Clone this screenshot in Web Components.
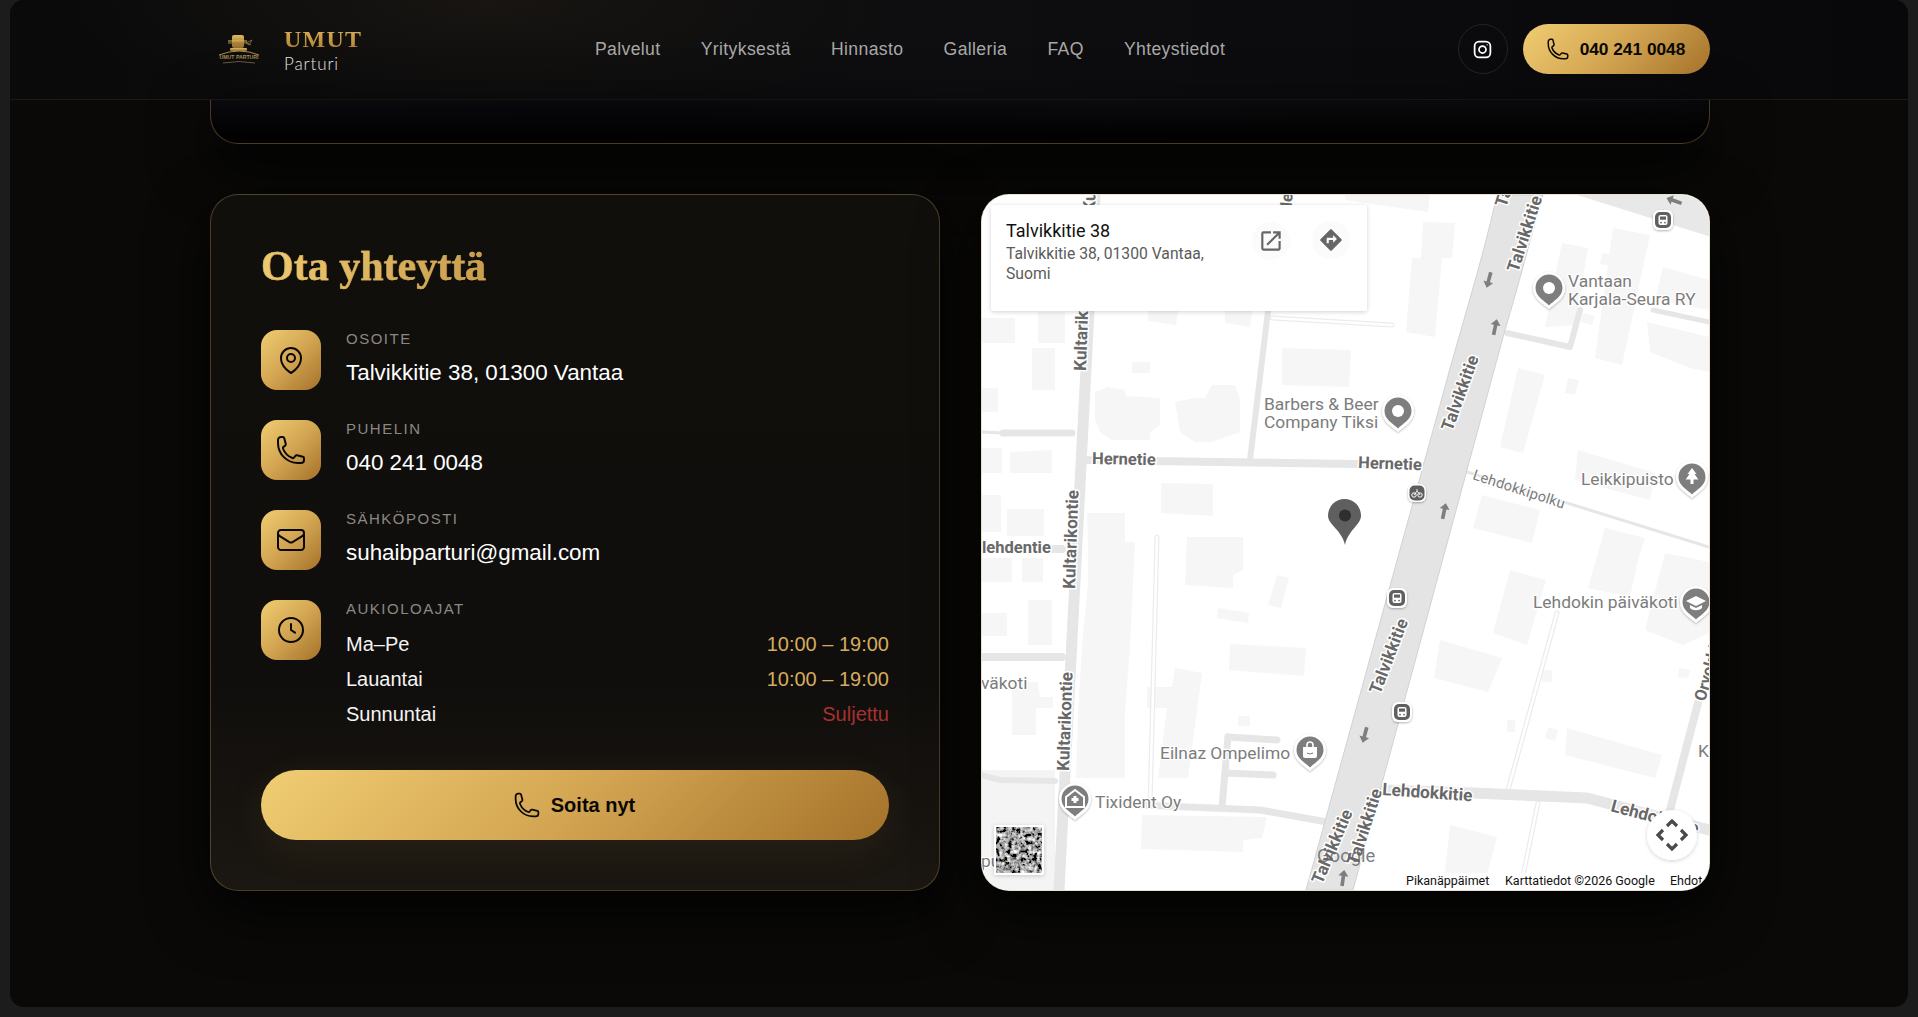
<!DOCTYPE html>
<html lang="fi"><head><meta charset="utf-8"><title>Umut Parturi</title>
<style>
html,body{margin:0;padding:0;height:100%;background:#1c1c1c}
body{font-family:"Liberation Sans",Arial,sans-serif;overflow:hidden}
</style></head><body>
<app-frame>
  <site-header></site-header>
  <hero-strip></hero-strip>
  <contact-section>
    <contact-card>
      <info-row slot="rows" icon="pin" label="OSOITE">Talvikkitie 38, 01300 Vantaa</info-row>
      <info-row slot="rows" icon="phone" label="PUHELIN">040 241 0048</info-row>
      <info-row slot="rows" icon="mail" label="SÄHKÖPOSTI">suhaibparturi@gmail.com</info-row>
      <info-row slot="rows" icon="clock" label="AUKIOLOAJAT">
        <hours-row day="Ma–Pe" time="10:00 – 19:00"></hours-row>
        <hours-row day="Lauantai" time="10:00 – 19:00"></hours-row>
        <hours-row day="Sunnuntai" time="Suljettu" closed></hours-row>
      </info-row>
    </contact-card>
    <map-panel></map-panel>
  </contact-section>
</app-frame>
<script>
const ICONS={
 phone:'<path d="M2.25 6.75c0 8.284 6.716 15 15 15h2.25a2.25 2.25 0 002.25-2.25v-1.372c0-.516-.351-.966-.852-1.091l-4.423-1.106c-.44-.11-.902.055-1.173.417l-.97 1.293c-.282.376-.769.542-1.21.38a12.035 12.035 0 01-7.143-7.143c-.162-.441.004-.928.38-1.21l1.293-.97c.363-.271.527-.734.417-1.173L6.963 3.102a1.125 1.125 0 00-1.091-.852H4.5A2.25 2.25 0 002.25 4.5v2.25z"/>',
 pin:'<path d="M15 10.5a3 3 0 11-6 0 3 3 0 016 0z"/><path d="M19.5 10.5c0 7.142-7.5 11.25-7.5 11.25S4.5 17.642 4.5 10.5a7.5 7.5 0 1115 0z"/>',
 mail:'<path d="M21.75 6.75v10.5a2.25 2.25 0 01-2.25 2.25h-15a2.25 2.25 0 01-2.25-2.25V6.75m19.5 0A2.25 2.25 0 0019.5 4.5h-15a2.25 2.25 0 00-2.25 2.25m19.5 0v.243a2.25 2.25 0 01-1.07 1.916l-7.5 4.615a2.25 2.25 0 01-2.36 0L3.32 8.91a2.25 2.25 0 01-1.07-1.916V6.75"/>',
 clock:'<circle cx="12" cy="12" r="9"/><path d="M12 7.5V12l3 2"/>'
};
const svgIcon=(n,s,w=1.5)=>`<svg width="${s}" height="${s}" viewBox="0 0 24 24" fill="none" stroke="currentColor" stroke-width="${w}" stroke-linecap="round" stroke-linejoin="round">${ICONS[n]}</svg>`;
const GOLD='linear-gradient(135deg,#f0cd72 0%,#d3a552 50%,#a4722a 100%)';
function def(name,html){customElements.define(name,class extends HTMLElement{constructor(){super();this.attachShadow({mode:'open'}).innerHTML=typeof html==='function'?html(this):html}})}

def('app-frame',`<style>:host{display:block;height:1007px;margin:0 10px;box-sizing:border-box;background:#0a0908;border-radius:14px;overflow:hidden;position:relative}
</style><slot></slot>`);

def('site-header',`<style>
:host{display:flex;align-items:center;justify-content:space-between;height:100px;box-sizing:border-box;padding:0 198px 1px 200px;border-bottom:1px solid #1b1a19;
background:radial-gradient(420px 120px at 480px 0,#181512 0,rgba(20,18,16,.55) 60%,transparent 100%),linear-gradient(90deg,#0a0a0a,#0e0e10 50%,#08080a)}
.logo{display:flex;align-items:center;gap:24px;margin-left:8px}
.brand{display:flex;flex-direction:column;margin-top:2px}
.umut{font:bold 24px/27px "Liberation Serif",serif;letter-spacing:1.2px;background:linear-gradient(180deg,#e0b65f,#a9792d);-webkit-background-clip:text;background-clip:text;color:transparent}
.par{font:300 17px/21px "Lato",sans-serif;color:#e2e2e2;letter-spacing:.9px}
nav{display:flex;gap:40.2px}
nav a{font:17.6px/24px "Liberation Sans",sans-serif;color:#a8a8a8;letter-spacing:.37px}
.acts{display:flex;align-items:center;gap:15px}
.ig{width:50px;height:50px;border:1px solid #232323;border-radius:50%;box-sizing:border-box;display:flex;align-items:center;justify-content:center;color:#fff}
.call{height:50px;width:187px;border-radius:25px;background:${GOLD};display:flex;align-items:center;justify-content:center;gap:10px;color:#0a0805;font:bold 17.3px "Liberation Sans",sans-serif;padding-right:2px;box-sizing:border-box}
</style>
<div class="logo">
<svg width="42" height="32" viewBox="0 0 42 32">
<defs><linearGradient id="lg" x1="0" y1="0" x2="0" y2="1"><stop offset="0" stop-color="#e0b95f"/><stop offset="1" stop-color="#8f6a2c"/></linearGradient></defs>
<g fill="url(#lg)"><rect x="14" y="2" width="12" height="13" rx="2"/><rect x="10" y="7" width="19" height="4" opacity=".55"/><rect x="12" y="15" width="17" height="3" rx="1"/></g>
<path d="M28 10l6-3-3 5zM28 9l5 3" stroke="#8a7a4e" stroke-width=".8" fill="none"/>
<path d="M1 22Q21 14 41 22" stroke="#a88d55" stroke-width="1" fill="none"/>
<text x="21" y="26" text-anchor="middle" font-family="Liberation Sans" font-weight="bold" font-size="5.2" fill="#a88b50">UMUT PARTURI</text>
<path d="M5 30Q21 27 37 30" stroke="#8d7a50" stroke-width=".7" fill="none"/>
</svg>
<div class="brand"><span class="umut">UMUT</span><span class="par">Parturi</span></div>
</div>
<nav><a>Palvelut</a><a>Yrityksestä</a><a>Hinnasto</a><a>Galleria</a><a>FAQ</a><a>Yhteystiedot</a></nav>
<div class="acts"><span class="ig"><svg width="21" height="21" viewBox="0 0 24 24" fill="none" stroke="#fff" stroke-width="2"><rect x="3" y="3" width="18" height="18" rx="5"/><circle cx="12" cy="12" r="4"/><circle cx="17.3" cy="6.7" r=".8" fill="#fff" stroke="none"/></svg></span>
<span class="call">${svgIcon('phone',24)}<span>040 241 0048</span></span></div>`);

def('hero-strip',`<style>:host{display:block;height:44px;margin:0 198px 50px 200px;box-sizing:border-box;border:1px solid rgba(190,150,90,.36);border-top:0;border-radius:0 0 28px 28px;
background:linear-gradient(180deg,rgba(6,6,10,.3),rgba(0,0,0,.9) 85%),linear-gradient(90deg,#0b0b11,#0a0a0e 30%,#0d0d10 60%,#0c0c0e 80%,#09090b);box-shadow:0 20px 60px rgba(0,0,0,.8)}</style>`);

def('contact-section',`<style>:host{display:flex;gap:41px;margin:0 198px 0 200px;align-items:stretch}</style><slot></slot>`);

def('contact-card',`<style>
:host{display:block;width:730px;flex:none;box-sizing:border-box;padding:48px 50px 49px;border:1px solid rgba(190,150,90,.34);border-radius:28px;
background:linear-gradient(180deg,#110f0c 0,#100e0c 70%,#1b1712 100%);box-shadow:0 20px 60px rgba(0,0,0,.8)}
h2{margin:0 0 41px;font:bold 42px/46px "Liberation Serif",serif;-webkit-text-stroke:.4px #dcb55f;background:linear-gradient(100deg,#efcb70,#c99c4c);-webkit-background-clip:text;background-clip:text;color:transparent;width:max-content}
.rows{display:flex;flex-direction:column;gap:30px}
gold-button{margin-top:38px}
</style><h2>Ota yhteyttä</h2><div class="rows"><slot name="rows"></slot></div><gold-button></gold-button>`);

def('info-row',h=>`<style>
:host{display:flex;gap:25px;align-items:flex-start}
.ic{width:60px;height:60px;flex:none;border-radius:16px;background:${GOLD};display:flex;align-items:center;justify-content:center;color:#0a0805}
.tx{flex:1;min-width:0}
.lb{font:15px/18px "Liberation Sans",sans-serif;letter-spacing:1.5px;color:#8b8883}
.v{margin-top:10px;font:22.4px/30px "Liberation Sans",sans-serif;color:#fff}
.v.h{margin-top:9px}
</style><div class="ic">${svgIcon(h.getAttribute('icon'),32)}</div><div class="tx"><div class="lb">${h.getAttribute('label')}</div><div class="v ${h.getAttribute('icon')==='clock'?'h':''}"><slot></slot></div></div>`);

def('hours-row',h=>`<style>:host{display:flex;justify-content:space-between;font:20px/35px "Liberation Sans",sans-serif;color:#f4f4f4}
.t{color:${h.hasAttribute('closed')?'#a8312f':'#d6ab60'}}</style><span>${h.getAttribute('day')}</span><span class="t">${h.getAttribute('time')}</span>`);

def('gold-button',`<style>:host{display:flex;height:70px;border-radius:35px;background:${GOLD};align-items:center;justify-content:center;gap:10px;color:#0a0805;font:bold 20px "Liberation Sans",sans-serif;box-shadow:0 10px 40px rgba(212,165,80,.09);padding-right:2px;margin-bottom:-.4px}</style>${svgIcon('phone',28)}<span>Soita nyt</span>`);

/* ---------- map ---------- */
const B=[ // buildings
[1095,392,1108,387,1125,390,1126,396,1160,398,1160,425,1150,432,1150,440,1112,440,1100,432,1095,420],
[1175,402,1195,398,1205,398,1212,385,1235,385,1240,400,1240,432,1212,442,1195,442,1180,432],
[1282,348,1351,350,1349,387,1282,385],[1032,348,1055,348,1055,390,1032,390],[1132,362,1150,362,1150,373,1132,373],
[982,318,1015,318,1015,343,982,343],[1038,312,1065,312,1065,343,1038,343],[981,388,998,388,998,412,981,412],
[981,448,1002,448,1002,473,981,473],[1010,452,1052,450,1052,473,1010,473],[1148,311,1178,311,1176,325,1148,321],[1225,311,1252,311,1250,327,1225,323],
[1161,483,1213,484,1213,516,1161,513],[1345,195,1430,195,1428,212,1345,200],[1423,222,1455,223,1452,258,1442,258,1435,337,1406,332,1412,258,1421,258],
[1562,243,1588,248,1575,325,1545,327],[1613,228,1650,235,1622,365,1595,358],[1663,267,1709,280,1709,310,1655,300],
[1647,322,1709,337,1709,372,1690,368,1650,352],[1602,253,1610,254,1608,265,1600,264],[1583,313,1595,316,1592,325,1581,322],
[1518,368,1545,375,1523,453,1500,447],[1568,378,1579,380,1575,395,1565,393],[1578,450,1655,473,1650,500,1575,480],[1482,495,1540,510,1532,543,1473,528],
[1605,528,1645,538,1638,560,1630,597,1588,588],[1665,553,1709,562,1709,633,1683,645,1645,630],[1510,570,1546,580,1527,645,1493,633],
[1440,640,1502,658,1488,692,1434,678],[1567,728,1662,755,1655,778,1565,755],[1450,825,1497,837,1483,890,1443,890],
[1542,670,1552,670,1552,682,1542,682],[1507,720,1515,720,1515,732,1507,732],[1548,727,1558,730,1555,741,1545,738],[1679,668,1690,670,1688,678,1678,677],
[1007,509,1044,509,1044,536,1007,536],[981,495,1001,495,1001,532,981,532],[982,558,1012,558,1012,582,982,582],[1022,558,1043,558,1043,582,1022,582],
[1028,600,1052,600,1052,645,1028,645],[981,613,1007,613,1007,636,981,636],[1012,682,1038,682,1040,697,1053,697,1053,708,1036,708,1036,735,1012,735],
[1087,513,1125,513,1125,542,1135,542,1133,583,1130,647,1125,712,1125,778,1076,778,1078,712,1082,647,1088,583,1088,542],
[1187,537,1243,537,1243,570,1233,575,1233,588,1185,585],[1277,575,1289,578,1281,608,1268,605],[1218,608,1249,613,1248,623,1217,618],
[1230,644,1306,648,1304,676,1229,670],[1175,668,1202,673,1188,778,1158,778,1167,708,1147,708,1147,687,1172,687],[1238,716,1250,716,1250,726,1238,726],
[1142,815,1267,817,1262,838,1243,840,1243,852,1141,849]
];
const R=[ // stroked roads: points,width
['1095,195 1059,890',11],['1080,460 1420,465',8],['1268,311 1250,460',6],['1003,433 1072,433',7],['981,657 1062,657',8],['1050,549 1062,549',8],
['981,775 1000,780 1055,781',6],['1140,805 1260,810 1327,822',7],['1228,737 1222,807',7],['1228,737 1277,740',7],['1225,773 1273,775',7],
['1385,790 1473,793 1587,798 1709,830',11],['1698,703 1670,810',8],['1467,472 1709,547',3],['1507,333 1570,347 1580,310',6],['1653,310 1709,322',5],['981,432 1003,433',3]
];
const P=['1157,537 1150,807','1557,613 1508,790','1538,803 1520,890','1272,318 1392,325']; // footpaths
const bus=(x,y)=>`<g transform="translate(${x} ${y})"><rect x="-10" y="-10" width="20" height="20" rx="6" fill="#fff" filter="url(#sh)"/><rect x="-8" y="-8" width="16" height="16" rx="5" fill="#606060"/><rect x="-4.5" y="-5" width="9" height="10" rx="2" fill="#fff"/><rect x="-3" y="-3.5" width="6" height="3.2" fill="#606060"/><circle cx="-2" cy="2.6" r=".9" fill="#606060"/><circle cx="2" cy="2.6" r=".9" fill="#606060"/></g>`;
const bike=(x,y)=>`<g transform="translate(${x} ${y})"><rect x="-9" y="-9" width="18" height="18" rx="6" fill="#fff" filter="url(#sh)"/><rect x="-7.5" y="-7.5" width="15" height="15" rx="5" fill="#5e5e5e"/><circle cx="-3" cy="2" r="2.2" fill="none" stroke="#fff"/><circle cx="3" cy="2" r="2.2" fill="none" stroke="#fff"/><path d="M-3 2l3-4 3 4M-1-3h2" stroke="#fff" fill="none" stroke-width=".9"/></g>`;
const arrow=(x,y,a)=>`<path transform="translate(${x} ${y}) rotate(${a})" d="M0-9l5 6h-3.2v10h-3.6v-10h-3.2z" fill="#7e7e7e"/>`;
const poi=(x,y,inner)=>`<g transform="translate(${x} ${y})"><path d="M0 21C-5 16-16 11-16 0a16 16 0 0132 0C16 11 5 16 0 21z" fill="#fff" filter="url(#sh)"/><path d="M0 17.5C-4 13-13.5 9-13.5 0a13.5 13.5 0 0127 0C13.5 9 4 13 0 17.5z" fill="#7e7e7e"/>${inner}</g>`;
const dot='<circle r="6" fill="#fff"/>';
const tree='<path d="M0-9l4.5 6h-2l3.8 5.500H1.5V7h-3V2.500h-4.800l3.800-5.500h-2z" fill="#fff"/>';
const cap='<path d="M0-6L10-1 0 4-10-1z" fill="#fff"/><path d="M-6 3v3c3 3 9 3 12 0V3L0 6z" fill="#fff"/>';
const bag='<path d="M-7-3h14v9a2 2 0 01-2 2H-5a2 2 0 01-2-2z" fill="#fff"/><path d="M-3-3v-2a3 3 0 016 0v2" stroke="#fff" stroke-width="1.600" fill="none"/><path d="M-3 3q3 2 6 0" stroke="#7a7a7a" fill="none"/>';
const home='<path d="M0-9l9 7V8H-9V-2z" fill="none" stroke="#fff" stroke-width="2"/><path d="M-1.500-3h3v2h2v3h-2v2h-3V2h-2v-3h2z" fill="#fff"/>';
const T=(s,x,y,a=0,c='lb')=>`<text class="${c}" transform="translate(${x} ${y}) rotate(${a})">${s}</text>`;

def('map-panel',`<style>
:host{display:block;flex:1;box-sizing:border-box;border:1px solid rgba(190,150,90,.3);border-radius:28px;overflow:hidden;background:#fff;box-shadow:0 20px 60px rgba(0,0,0,.8)}
svg{display:block;width:728px;height:695px}
text{font-family:Roboto,sans-serif}
.lb{font-size:16.5px;font-weight:700;fill:#686868;stroke:#fff;stroke-width:3px;paint-order:stroke;stroke-linejoin:round}
.lg{font-size:17.2px;font-weight:700;fill:#686868;stroke:#fff;stroke-width:3px;paint-order:stroke;stroke-linejoin:round}
.po{font-size:17.4px;fill:#7c7c7c;stroke:#fff;stroke-width:2.500px;paint-order:stroke;stroke-linejoin:round}
.th{font-size:14.500px;fill:#7b7b7b;stroke:#fff;stroke-width:2px;paint-order:stroke;letter-spacing:.2px}
</style>
<svg viewBox="982 195 728 695" xmlns="http://www.w3.org/2000/svg">
<defs>
<filter id="sh" x="-30%" y="-30%" width="160%" height="160%"><feDropShadow dx="0" dy="1" stdDeviation="1" flood-color="#000" flood-opacity=".3"/></filter>
<filter id="cs" x="-5%" y="-5%" width="110%" height="115%"><feDropShadow dx="0" dy="1" stdDeviation="2" flood-color="#000" flood-opacity=".18"/></filter>
<filter id="sat" x="0" y="0" width="100%" height="100%"><feTurbulence type="fractalNoise" baseFrequency=".24" numOctaves="3" seed="4"/><feColorMatrix type="matrix" values="1.5 1.5 0 0 -1.15 1.5 1.5 0 0 -1.15 1.5 1.5 0 0 -1.15 0 0 0 0 1"/><feGaussianBlur stdDeviation=".35"/></filter>
</defs>
<rect x="981" y="195" width="730" height="695" fill="#fff"/>
<path d="M981 770h74v120h-74z" fill="#f4f4f4"/>
${B.map(p=>`<polygon points="${p.join(',')}" fill="#f6f6f6"/>`).join('')}
${P.map(p=>`<polyline points="${p}" fill="none" stroke="#ececec" stroke-width="5" stroke-linecap="round"/><polyline points="${p}" fill="none" stroke="#fff" stroke-width="2.500" stroke-linecap="round"/>`).join('')}
${R.map(([p,w])=>`<polyline points="${p}" fill="none" stroke="#e6e6e6" stroke-width="${w}" stroke-linecap="round" stroke-linejoin="round"/>`).join('')}
<polygon points="1577,195 1711,195 1711,237" fill="#e8e8e8"/>
<path d="M1497 195L1543 195C1530 240 1520 280 1505 330L1353 890L1306 890L1440 405C1460 330 1480 270 1497 195z" fill="#e4e4e4" stroke="#d2d2d2" stroke-width="1"/>
${arrow(1489,279,195)}${arrow(1495,328,12)}${arrow(1444,512,12)}${arrow(1365,734,195)}${arrow(1343,879,8)}${arrow(1675,201,-70)}
${T('Talvikkitie',1506,208,-72,'lg')}${T('Talvikkitie',1518,273,-72,'lg')}${T('Talvikkitie',1452,432,-70,'lg')}${T('Talvikkitie',1380,695,-69,'lg')}${T('Talvikkitie',1322,885,-67,'lg')}${T('Talvikkitie',1358,866,-72,'lg')}
${T('Kultarikontie',1095,212,-88,'lg')}${T('Hernetie',1291,214,-85)}
${T('Kultarikontie',1086,371,-88,'lg')}${T('Kultarikontie',1075,589,-88,'lg')}${T('Kultarikontie',1069,771,-88,'lg')}
${T('Hernetie',1092,464,1)}${T('Hernetie',1358,468,2)}${T('lehdentie',982,553,0)}
${T('Lehdokkitie',1382,795,4,'lg')}${T('Lehdokkitie',1610,811,15,'lg')}${T('Orvokkitie',1705,702,-74)}
${T('Lehdokkipolku',1472,479,18,'th')}
${T('Barbers &amp; Beer',1264,410,0,'po')}${T('Company Tiksi',1264,428,0,'po')}
${T('Vantaan',1568,287,0,'po')}${T('Karjala-Seura RY',1568,305,0,'po')}
${T('Leikkipuisto',1581,485,0,'po')}${T('Lehdokin päiväkoti',1533,608,0,'po')}
${T('Eilnaz Ompelimo',1160,759,0,'po')}${T('Tixident Oy',1095,808,0,'po')}${T('väkoti',981,689,0,'po')}${T('pu',981,867,0,'po')}${T('K',1698,757,0,'po')}
${poi(1398,411,dot)}${poi(1549,288,dot)}${poi(1692,477,tree)}${poi(1696,602,cap)}${poi(1310,750,bag)}${poi(1075,799,home)}
${bus(1663,220)}${bus(1397,598)}${bus(1402,712)}${bike(1417,493)}
<path d="M1345 545C1342 530 1328 525 1328 515.500a16.500 16.500 0 0133 0C1361 525 1348 530 1345 545z" fill="#5f5f5f"/><circle cx="1345" cy="515.500" r="6" fill="#2f2f2f"/>
<text x="1317" y="862" font-size="18.500" fill="#666" fill-opacity=".85">Google</text>
<rect x="994" y="825" width="50" height="50" rx="2" fill="#fff" filter="url(#cs)"/>
<rect x="996" y="827" width="46" height="46" filter="url(#sat)"/>
<g filter="url(#cs)"><rect x="991" y="205" width="376" height="106" rx="2" fill="#fff"/></g>
<text x="1006" y="236.500" font-size="18" font-weight="400" fill="#111">Talvikkitie 38</text>
<text x="1006" y="259" font-size="15.700" fill="#5b5b5b">Talvikkitie 38, 01300 Vantaa,</text>
<text x="1006" y="279" font-size="15.700" fill="#5b5b5b">Suomi</text>
<circle cx="1271" cy="241" r="19" fill="#fbfbfb"/><circle cx="1331" cy="240" r="19" fill="#fbfbfb"/>
<path transform="translate(1258 228) scale(1.08)" fill="#666" d="M19 19H5V5h7V3H5a2 2 0 0 0-2 2v14a2 2 0 0 0 2 2h14c1.100 0 2-.9 2-2v-7h-2v7zM14 3v2h3.590l-9.830 9.830 1.410 1.410L19 6.410V10h2V3h-7z"/>
<path transform="translate(1318 227) scale(1.08)" fill="#666" d="M21.710 11.290l-9-9a.996.996 0 0 0-1.410 0l-9 9a.996.996 0 0 0 0 1.410l9 9c.39.39 1.020.39 1.410 0l9-9a.996.996 0 0 0 0-1.410zM14 14.500V12h-4v3H8v-4c0-.55.45-1 1-1h5V7.500l3.500 3.500-3.500 3.500z"/>
<circle cx="1672" cy="835" r="25" fill="#fff" filter="url(#cs)"/>
<g fill="none" stroke="#4a4a4a" stroke-width="3.200"><path d="M1667 826l5-5 5 5"/><path d="M1667 844l5 5 5-5"/><path d="M1663 830l-5 5 5 5"/><path d="M1681 830l5 5-5 5"/></g>
<rect x="1400" y="873" width="311" height="17" fill="#fff" fill-opacity=".75"/>
<g font-size="12.500" fill="#111"><text x="1406" y="885">Pikanäppäimet</text><text x="1505" y="885">Karttatiedot ©2026 Google</text><text x="1670" y="885">Ehdot</text></g>
</svg>`);
</script>
</body></html>
